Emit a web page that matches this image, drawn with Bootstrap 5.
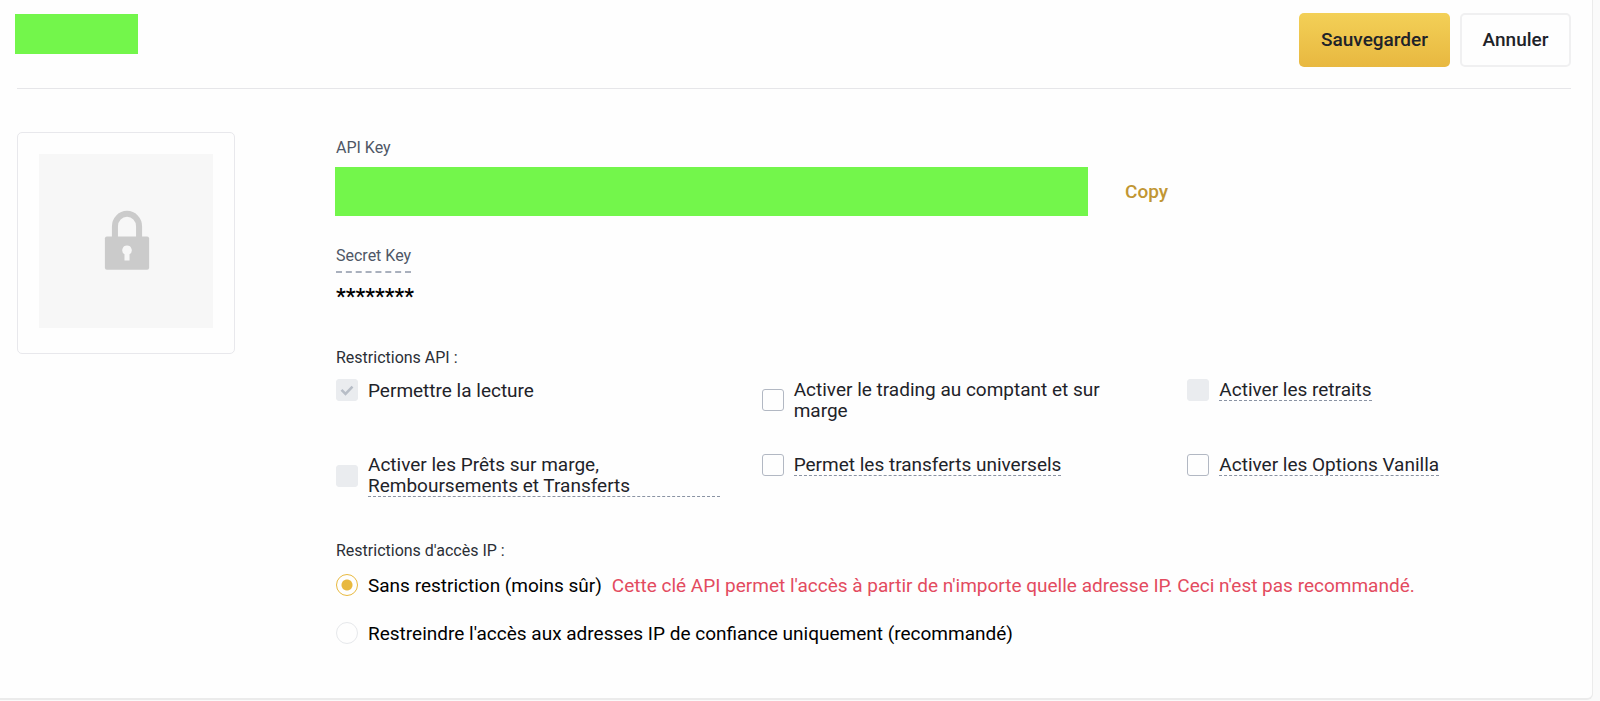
<!DOCTYPE html>
<html lang="fr">
<head>
<meta charset="utf-8">
<meta name="viewport" content="width=device-width, initial-scale=1">
<title>API</title>
<link href="https://cdn.jsdelivr.net/npm/bootstrap@5.3.0/dist/css/bootstrap.min.css" rel="stylesheet">
<style>
  body { background: #fafafa; color: #000; font-family: Roboto, "Liberation Sans", sans-serif; font-size: 19px; line-height: 21px; }
  .panel { background: #fefefe; border: solid #ebebeb; border-width: 0 1px 2px 0; border-radius: 0 0 6px 0; margin-right: 7px; padding: 13px 21px 54px 17px; }
  .panel-head { border-bottom: 1px solid #e6e6e9; padding-bottom: 21px; margin-bottom: 43px; }
  .actions { gap: 10px; }
  .hidden-name { background: #73f64b; width: 123px; height: 40px; margin: 1px 0 0 -2px; }
  .hidden-key { background: #73f64b; flex: 0 1 753px; height: 49px; margin-left: -1px; }
  .action { height: 54px; padding: 0 20px; border-radius: 5px; font-size: 19px; font-weight: 500; color: #1e2329; }
  .action-save { background: linear-gradient(#f3d057, #e8b840); border: 0; min-width: 151px; }
  .action-cancel { background: #fefefe; border: 2px solid #f0f0f1; min-width: 111px; }
  .action-copy { color: #c19634; font-size: 19px; font-weight: 500; line-height: 21px; margin-left: 37px; }
  .layout { gap: 101px; }
  .lock-card { width: 218px; padding: 21px 21px 25px; border: 1px solid #e8e8ec; border-radius: 5px; }
  .lock-card svg { display: block; width: 100%; height: auto; }
  .caption { font-size: 16px; line-height: 20px; color: #2b2f36; }
  .caption-soft { color: #4f5766; }
  .key-title { padding-top: 6px; margin-bottom: 9px; }
  .dashed { border-bottom: 2px dashed #a9b0bd; padding-bottom: 5px; }
  .stars { font-size: 22px; font-weight: 500; line-height: 20px; margin-top: 14px; }
  .api-title { margin-top: 41px; }
  .ip-title { margin: 44px 0 13px; }
  .options { display: grid; grid-template-columns: repeat(3, minmax(0, 1fr)); gap: 33px 42px; margin-top: 11px; color: #1e2329; }
  .choice { display: flex; align-items: center; gap: 10px; }
  .choice label { min-width: 0; }
  .choice .form-check-input { flex: none; width: 22px; height: 22px; margin: 0; border: 1px solid #b2b8c3; border-radius: 3px; background-color: #fefefe; }
  .choice .form-check-input:disabled { border-color: #eaecef; background-color: #eaecef; opacity: 1; }
  .choice .form-check-input:disabled ~ label { opacity: 1; }
  .choice .form-check-input:disabled:checked { background-image: url("data:image/svg+xml,%3Csvg xmlns='http://www.w3.org/2000/svg' viewBox='0 0 20 20'%3E%3Cpath fill='none' stroke='%23b7bdc6' stroke-width='2.6' d='M4.500 9.800l4 4L15.500 6.600'/%3E%3C/svg%3E"); }
  .choice .form-check-input[type=radio] { border-radius: 50%; border-color: #e6e8eb; }
  .choice .form-check-input[type=radio]:checked { border-color: #e8b93f; background-image: radial-gradient(circle, #e8b93f 5px, transparent 6px); }
  .second-choice { margin-top: 26px; }
  .hint { border-bottom: 1px dashed #8a93a3; }
  .warn { color: #e34b5f; }
</style>
</head>
<body>
<main class="panel">
  <header class="panel-head d-flex justify-content-between align-items-start">
    <div class="hidden-name"></div>
    <div class="actions d-flex">
      <button type="button" class="btn action action-save">Sauvegarder</button>
      <button type="button" class="btn action action-cancel">Annuler</button>
    </div>
  </header>
  <div class="layout d-flex align-items-start">
    <div class="lock-card flex-shrink-0">
      <svg viewBox="0 0 173 173" aria-hidden="true">
        <rect width="173" height="173" fill="#f7f7f7"/>
        <path d="M75.500 85V72a12 12.500 0 0 1 24 0v13" fill="none" stroke="#cbcbcb" stroke-width="6"/>
        <rect x="65.500" y="82" width="44" height="33" rx="2" fill="#cbcbcb"/>
        <path d="M87.500 91a4.700 4.700 0 0 1 2.500 8.700V106h-5v-6.300A4.700 4.700 0 0 1 87.500 91z" fill="#f7f7f7"/>
      </svg>
    </div>
    <div class="flex-grow-1">
      <div class="caption caption-soft key-title">API Key</div>
      <div class="d-flex align-items-center">
        <div class="hidden-key"></div>
        <button type="button" class="btn border-0 p-0 action-copy">Copy</button>
      </div>
      <div class="mt-4 pt-1"><span class="caption caption-soft dashed d-inline-block">Secret Key</span></div>
      <div class="stars">********</div>
      <div class="caption api-title">Restrictions API :</div>
      <div class="options">
        <div class="choice align-self-start">
          <input class="form-check-input" type="checkbox" id="o1" checked disabled>
          <label for="o1">Permettre la lecture</label>
        </div>
        <div class="choice align-self-start">
          <input class="form-check-input" type="checkbox" id="o2">
          <label for="o2">Activer le trading au comptant et sur marge</label>
        </div>
        <div class="choice align-self-start">
          <input class="form-check-input" type="checkbox" id="o3" disabled>
          <label for="o3" class="hint">Activer les retraits</label>
        </div>
        <div class="choice align-self-start">
          <input class="form-check-input" type="checkbox" id="o4" disabled>
          <label for="o4" class="hint">Activer les Prêts sur marge, Remboursements et Transferts</label>
        </div>
        <div class="choice align-self-start">
          <input class="form-check-input" type="checkbox" id="o5">
          <label for="o5" class="hint">Permet les transferts universels</label>
        </div>
        <div class="choice align-self-start">
          <input class="form-check-input" type="checkbox" id="o6">
          <label for="o6" class="hint">Activer les Options Vanilla</label>
        </div>
      </div>
      <div class="caption ip-title">Restrictions d'accès IP :</div>
      <div class="choice">
        <input class="form-check-input" type="radio" name="ip" id="r1" checked>
        <label for="r1">Sans restriction (moins sûr)</label>
        <span class="warn">Cette clé API permet l'accès à partir de n'importe quelle adresse IP. Ceci n'est pas recommandé.</span>
      </div>
      <div class="choice second-choice">
        <input class="form-check-input" type="radio" name="ip" id="r2">
        <label for="r2">Restreindre l'accès aux adresses IP de confiance uniquement (recommandé)</label>
      </div>
    </div>
  </div>
</main>
<script src="https://cdn.jsdelivr.net/npm/bootstrap@5.3.0/dist/js/bootstrap.bundle.min.js"></script>
</body>
</html>
